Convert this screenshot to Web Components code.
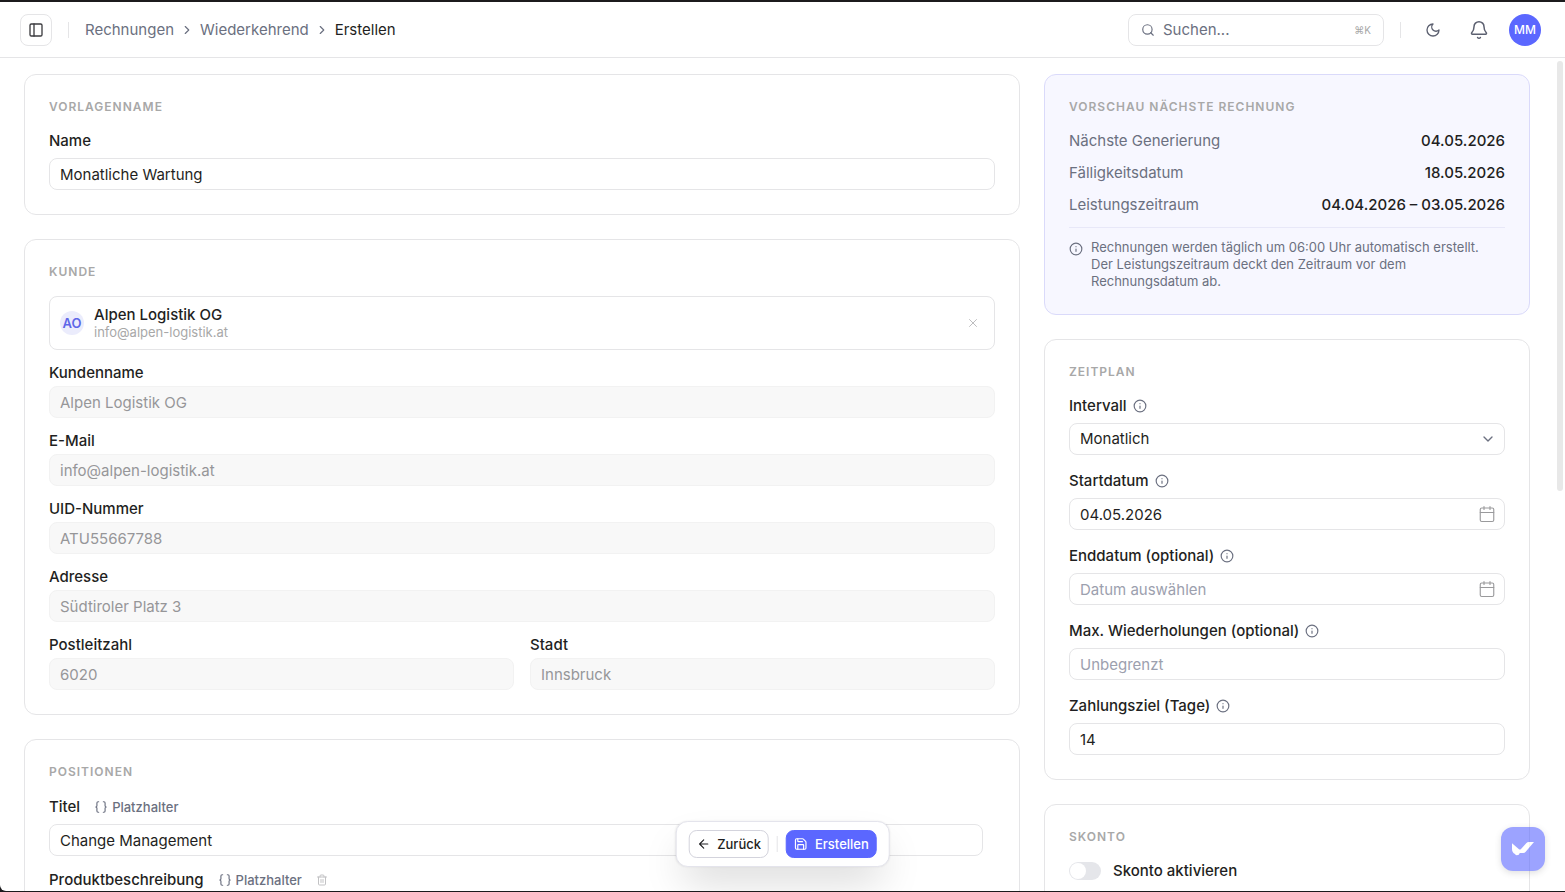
<!DOCTYPE html>
<html lang="de">
<head>
<meta charset="utf-8">
<meta name="viewport" content="width=device-width, initial-scale=1">
<title>Wiederkehrende Rechnung erstellen</title>
<style>
    :root {
        --text: #1f1f22;
        --muted: #6b7080;
        --faint: #a8a8a8;
        --placeholder: #9ca0ae;
        --line: #e5e5e7;
        --primary: #5b67ff;
    }
    html, body { height: 100%; }
    body {
        margin: 0;
        background: #1c1b1d;
        color: var(--text);
        font: 15px/20px Inter, "Liberation Sans", sans-serif;
        overflow: hidden;
    }
</style>
</head>
<body>
<invoice-app></invoice-app>

<script>
const ICONS = {
    panel: '<rect x="3" y="3" width="18" height="18" rx="2"/><path d="M9 3v18"/>',
    right: '<path d="m9 18 6-6-6-6"/>',
    down: '<path d="m6 9 6 6 6-6"/>',
    search: '<circle cx="11" cy="11" r="8"/><path d="m21 21-4.3-4.3"/>',
    moon: '<path d="M12 3a6 6 0 0 0 9 9 9 9 0 1 1-9-9Z"/>',
    bell: '<path d="M10.3 21a1.94 1.94 0 0 0 3.4 0"/><path d="M3.26 15.33A1 1 0 0 0 4 17h16a1 1 0 0 0 .74-1.67C19.41 13.96 18 12.5 18 8A6 6 0 0 0 6 8c0 4.5-1.41 5.96-2.74 7.33"/>',
    close: '<path d="M18 6 6 18M6 6l12 12"/>',
    info: '<circle cx="12" cy="12" r="10"/><path d="M12 16v-4M12 8h.01"/>',
    calendar: '<path d="M8 2v4M16 2v4M3 10h18"/><rect x="3" y="4" width="18" height="18" rx="2"/>',
    braces: '<path d="M8 3H7a2 2 0 0 0-2 2v5a2 2 0 0 1-2 2 2 2 0 0 1 2 2v5a2 2 0 0 0 2 2h1M16 21h1a2 2 0 0 0 2-2v-5a2 2 0 0 1 2-2 2 2 0 0 1-2-2V5a2 2 0 0 0-2-2h-1"/>',
    trash: '<path d="M3 6h18M19 6v14a2 2 0 0 1-2 2H7a2 2 0 0 1-2-2V6M8 6V4a2 2 0 0 1 2-2h4a2 2 0 0 1 2 2v2M10 11v6M14 11v6"/>',
    back: '<path d="m12 19-7-7 7-7M19 12H5"/>',
    save: '<path d="M15.2 3a2 2 0 0 1 1.4.6l3.8 3.8a2 2 0 0 1 .6 1.4V19a2 2 0 0 1-2 2H5a2 2 0 0 1-2-2V5a2 2 0 0 1 2-2z"/><path d="M17 21v-7a1 1 0 0 0-1-1H8a1 1 0 0 0-1 1v7M7 3v4a1 1 0 0 0 1 1h7"/>',
    brand: '<path fill="currentColor" stroke="none" d="M1 6.200 8 12.300Q9 13 10 12L15.200 6.200Q16.300 5 18 5H23L14.700 14.800Q13.700 16 12.200 16H8.800Q8.200 18.300 6 18.300 4.500 18.200 4 17 1 15.500 1 12Z"/>'
};

// Shared by every element that holds controls.
const BASE = `
    *, *::before, *::after { box-sizing: border-box; }
    button, input, select { font: inherit; color: inherit; margin: 0; }
    button { border: 0; padding: 0; background: none; cursor: pointer; }
`;

class UiElement extends HTMLElement {
    connectedCallback() {
        if (this.shadowRoot) return;
        this.attachShadow({ mode: "open" });
        this.shadowRoot.innerHTML = `<style>${BASE}</style>${this.template()}`;
    }

    attr(name) {
        return this.getAttribute(name) || "";
    }
}

// <ui-icon name="bell" size="18">
class UiIcon extends UiElement {
    template() {
        const size = this.attr("size") || 14;
        return `
            <style>
                :host { display: inline-flex; flex: none; }
                svg { display: block; fill: none; stroke: currentColor; stroke-linecap: round; stroke-linejoin: round; }
            </style>
            <svg width="${size}" height="${size}" viewBox="0 0 24 24" stroke-width="${this.attr("stroke") || 2}" aria-hidden="true">${ICONS[this.attr("name")]}</svg>
        `;
    }
}
customElements.define("ui-icon", UiIcon);

// Bordered section with an uppercase heading.
class UiCard extends UiElement {
    template() {
        return `
            <style>
                :host {
                    display: block;
                    border: 1px solid var(--line);
                    border-radius: 12px;
                    padding: 24px;
                    background: #fff;
                }
                :host([tinted]) { background: #f7f7ff; border-color: #dadafa; }
                h2 {
                    margin: 0 0 16px;
                    font-size: 12px;
                    line-height: 16px;
                    font-weight: 600;
                    letter-spacing: 1px;
                    text-transform: uppercase;
                    color: var(--faint);
                }
                .body { display: flex; flex-direction: column; gap: 16px; }
                :host([dense]) .body { gap: 13px; }
            </style>
            <h2>${this.attr("heading")}</h2>
            <div class="body"><slot></slot></div>
        `;
    }
}
customElements.define("ui-card", UiCard);

// Label plus text box or drop-down.
class UiField extends UiElement {
    control() {
        const value = this.attr("value");
        if (this.attr("type") === "select") {
            return `<select id="control"><option>${value}</option></select><ui-icon class="end down" name="down" size="16"></ui-icon>`;
        }
        const icon = this.hasAttribute("calendar")
            ? '<button class="end" type="button" aria-label="Kalender öffnen"><ui-icon name="calendar" size="18" stroke="1.5"></ui-icon></button>'
            : "";
        return `<input id="control" type="text" value="${value}" placeholder="${this.attr("placeholder")}"${this.hasAttribute("disabled") ? " disabled" : ""}>${icon}`;
    }

    template() {
        return `
            <style>
                :host { display: flex; flex-direction: column; gap: 7px; min-width: 0; }
                :host([disabled]) { gap: 3px; }
                .head { display: flex; align-items: center; gap: 6px; line-height: 20px; }
                label { font-weight: 500; }
                .info { display: flex; color: var(--muted); }
                .box { display: grid; align-items: center; }
                .box > * { grid-area: 1 / 1; }
                input, select {
                    width: 100%;
                    height: 32px;
                    padding: 0 10px;
                    border: 1px solid var(--line);
                    border-radius: 8px;
                    background: #fff;
                    appearance: none;
                    outline-color: var(--primary);
                }
                input::placeholder { color: var(--placeholder); opacity: 1; }
                input:disabled { background: #f8f8f8; border-color: #f2f2f2; color: #969698; }
                .end { display: flex; justify-self: end; margin-right: 9px; color: #9a9a9c; }
                .down { color: var(--muted); pointer-events: none; }
            </style>
            <div class="head">
                <label for="control">${this.attr("label")}</label>
                ${this.hasAttribute("info") ? '<button class="info" type="button" aria-label="Info"><ui-icon name="info"></ui-icon></button>' : ""}
                <slot></slot>
            </div>
            <div class="box">${this.control()}</div>
        `;
    }
}
customElements.define("ui-field", UiField);

// Small "{ } Platzhalter" action that sits beside a label.
class PlaceholderButton extends UiElement {
    template() {
        return `
            <style>
                :host { display: inline-flex; height: 21px; margin-left: 8px; }
                button { display: flex; align-items: center; gap: 4px; font-size: 13px; font-weight: 500; color: var(--muted); }
            </style>
            <button type="button"><ui-icon name="braces"></ui-icon>Platzhalter</button>
        `;
    }
}
customElements.define("placeholder-button", PlaceholderButton);

class UiSwitch extends UiElement {
    template() {
        return `
            <style>
                :host { display: flex; align-items: center; gap: 12px; }
                input {
                    appearance: none;
                    display: flex;
                    width: 32px;
                    height: 18px;
                    padding: 1px;
                    border-radius: 9px;
                    background: #e5e6ea;
                }
                input::before { content: ""; width: 16px; border-radius: 8px; background: #fff; }
                input:checked { justify-content: flex-end; background: var(--primary); }
                label { font-weight: 500; line-height: 20px; }
            </style>
            <input id="toggle" type="checkbox" role="switch">
            <label for="toggle"><slot></slot></label>
        `;
    }
}
customElements.define("ui-switch", UiSwitch);

class CustomerChip extends UiElement {
    template() {
        return `
            <style>
                :host {
                    display: flex;
                    align-items: center;
                    gap: 10px;
                    height: 54px;
                    box-sizing: border-box;
                    padding: 0 14px 0 10px;
                    border: 1px solid var(--line);
                    border-radius: 8px;
                }
                .avatar {
                    display: grid;
                    place-items: center;
                    width: 24px;
                    height: 24px;
                    border-radius: 50%;
                    background: #ebecfc;
                    color: #5d66e8;
                    font-size: 13px;
                    font-weight: 600;
                }
                .who { flex: 1; min-width: 0; }
                .name { font-weight: 500; line-height: 18px; }
                .mail { font-size: 13px; line-height: 16px; color: var(--faint); }
                button { display: flex; color: #b4b4b6; }
            </style>
            <div class="avatar">AO</div>
            <div class="who">
                <div class="name">${this.attr("name")}</div>
                <div class="mail">${this.attr("mail")}</div>
            </div>
            <button type="button" aria-label="Kunde entfernen"><ui-icon name="close" stroke="1.5"></ui-icon></button>
        `;
    }
}
customElements.define("customer-chip", CustomerChip);

class InvoicePreview extends UiElement {
    template() {
        return `
            <style>
                :host { display: block; }
                dl { display: grid; gap: 12px; margin: 0; padding-bottom: 12px; border-bottom: 1px solid #e8e8f8; }
                dl div { display: flex; justify-content: space-between; gap: 16px; line-height: 20px; }
                dt { color: var(--muted); }
                dd { margin: 0; font-weight: 500; }
                .note { display: flex; gap: 8px; padding-top: 11px; font-size: 13px; line-height: 17px; color: var(--muted); }
                .note ui-icon { padding-top: 3px; }
                p { margin: 0; }
            </style>
            <dl>
                <div><dt>Nächste Generierung</dt><dd>04.05.2026</dd></div>
                <div><dt>Fälligkeitsdatum</dt><dd>18.05.2026</dd></div>
                <div><dt>Leistungszeitraum</dt><dd>04.04.2026 – 03.05.2026</dd></div>
            </dl>
            <div class="note">
                <ui-icon name="info"></ui-icon>
                <p>Rechnungen werden täglich um 06:00 Uhr automatisch erstellt.<br>Der Leistungszeitraum deckt den Zeitraum vor dem Rechnungsdatum ab.</p>
            </div>
        `;
    }
}
customElements.define("invoice-preview", InvoicePreview);

class AppHeader extends UiElement {
    template() {
        return `
            <style>
                :host {
                    display: flex;
                    align-items: center;
                    flex: none;
                    gap: 16px;
                    height: 56px;
                    box-sizing: border-box;
                    padding: 0 24px 0 20px;
                    border-bottom: 1px solid var(--line);
                }
                button { display: grid; place-items: center; width: 32px; height: 32px; color: #5c6070; }
                .toggle { border: 1px solid var(--line); border-radius: 8px; color: #3c3c40; }
                .divider { width: 1px; height: 16px; background: var(--line); }
                nav { flex: 1; }
                ol { display: flex; align-items: center; gap: 6px; margin: 0; padding: 0; list-style: none; color: var(--muted); }
                li { display: flex; align-items: center; gap: 6px; }
                a { color: inherit; text-decoration: none; }
                [aria-current] { color: var(--text); }
                .search {
                    display: flex;
                    align-items: center;
                    gap: 8px;
                    width: 256px;
                    height: 32px;
                    padding: 0 12px;
                    border: 1px solid var(--line);
                    border-radius: 8px;
                    color: var(--muted);
                }
                .search input { flex: 1; min-width: 0; padding: 0; border: 0; outline: 0; background: none; appearance: none; }
                .search input::placeholder { color: inherit; opacity: 1; }
                kbd { font: inherit; font-size: 10px; color: var(--faint); }
                .tools { display: flex; align-items: center; gap: 14px; }
                .tools .avatar { border-radius: 50%; background: var(--primary); color: #fff; font-size: 12px; font-weight: 500; }
            </style>
            <button class="toggle" type="button" aria-label="Seitenleiste"><ui-icon name="panel" size="16"></ui-icon></button>
            <span class="divider"></span>
            <nav aria-label="Brotkrumen">
                <ol>
                    <li><a href="#rechnungen">Rechnungen</a><ui-icon name="right"></ui-icon></li>
                    <li><a href="#wiederkehrend">Wiederkehrend</a><ui-icon name="right"></ui-icon></li>
                    <li aria-current="page">Erstellen</li>
                </ol>
            </nav>
            <label class="search">
                <ui-icon name="search"></ui-icon>
                <input type="search" placeholder="Suchen..." aria-label="Suchen">
                <kbd>⌘K</kbd>
            </label>
            <span class="divider"></span>
            <div class="tools">
                <button type="button" aria-label="Dunkelmodus"><ui-icon name="moon" size="16"></ui-icon></button>
                <button type="button" aria-label="Benachrichtigungen"><ui-icon name="bell" size="20" stroke="1.8"></ui-icon></button>
                <button class="avatar" type="button">MM</button>
            </div>
        `;
    }
}
customElements.define("app-header", AppHeader);

// Floating bar with the form's actions.
class ActionBar extends UiElement {
    template() {
        return `
            <style>
                :host {
                    display: flex;
                    align-items: center;
                    gap: 8px;
                    padding: 8px 12px;
                    border: 1px solid #e4e4ec;
                    border-radius: 12px;
                    background: #fff;
                    box-shadow: 0 20px 40px -8px rgb(0 0 0 / .18), 0 0 2px rgb(0 0 0 / .08);
                }
                button {
                    display: flex;
                    align-items: center;
                    gap: 7px;
                    height: 28px;
                    padding: 0 7px;
                    border: 1px solid #d3d3dc;
                    border-radius: 8px;
                    font-size: 13px;
                    font-weight: 500;
                    background: #fff;
                }
                button.primary { border-color: var(--primary); background: var(--primary); color: #fff; }
                .divider { width: 1px; height: 16px; background: var(--line); }
            </style>
            <button type="button"><ui-icon name="back"></ui-icon>Zurück</button>
            <span class="divider"></span>
            <button class="primary" type="submit"><ui-icon name="save"></ui-icon>Erstellen</button>
        `;
    }
}
customElements.define("action-bar", ActionBar);

class InvoiceApp extends UiElement {
    template() {
        return `
            <style>
                :host {
                    position: relative;
                    display: flex;
                    flex-direction: column;
                    height: calc(100vh - 3px);
                    margin-top: 2px;
                    overflow: hidden;
                    border-bottom-left-radius: 6px;
                    background: #fff;
                }
                main {
                    flex: 1;
                    min-height: 0;
                    overflow: hidden;
                    display: grid;
                    grid-template-columns: repeat(3, minmax(0, 1fr));
                    align-items: start;
                    gap: 24px;
                    padding: 16px 35px 16px 24px;
                }
                .column { display: flex; flex-direction: column; gap: 24px; }
                .wide { grid-column: span 2; }
                .pair { display: grid; grid-template-columns: 1fr 1fr; gap: 16px; }
                .position { display: flex; flex-direction: column; gap: 13px; padding-right: 12px; }
                .delete { display: flex; margin-left: 8px; color: #c2c2c4; }
                .thumb { position: absolute; top: 59px; right: 2px; width: 6px; height: 430px; border-radius: 3px; background: #e8e8e8; }
                action-bar { position: absolute; bottom: 24px; left: 50%; transform: translateX(-50%); }
                .assist {
                    position: absolute;
                    right: 20px;
                    bottom: 20px;
                    display: grid;
                    place-items: center;
                    width: 44px;
                    height: 44px;
                    border-radius: 12px;
                    background: var(--primary);
                    color: #fff;
                    opacity: .6;
                    box-shadow: 0 2px 6px rgb(0 0 0 / .2);
                }
            </style>
            <app-header></app-header>
            <main>
                <div class="column wide">
                    <ui-card heading="Vorlagenname">
                        <ui-field label="Name" value="Monatliche Wartung"></ui-field>
                    </ui-card>
                    <ui-card heading="Kunde" dense>
                        <customer-chip name="Alpen Logistik OG" mail="info@alpen-logistik.at"></customer-chip>
                        <ui-field label="Kundenname" value="Alpen Logistik OG" disabled></ui-field>
                        <ui-field label="E-Mail" value="info@alpen-logistik.at" disabled></ui-field>
                        <ui-field label="UID-Nummer" value="ATU55667788" disabled></ui-field>
                        <ui-field label="Adresse" value="Südtiroler Platz 3" disabled></ui-field>
                        <div class="pair">
                            <ui-field label="Postleitzahl" value="6020" disabled></ui-field>
                            <ui-field label="Stadt" value="Innsbruck" disabled></ui-field>
                        </div>
                    </ui-card>
                    <ui-card heading="Positionen">
                        <div class="position">
                            <ui-field label="Titel" value="Change Management"><placeholder-button></placeholder-button></ui-field>
                            <ui-field label="Produktbeschreibung">
                                <placeholder-button></placeholder-button>
                                <button class="delete" type="button" aria-label="Löschen"><ui-icon name="trash" size="12"></ui-icon></button>
                            </ui-field>
                        </div>
                    </ui-card>
                </div>
                <div class="column">
                    <ui-card heading="Vorschau nächste Rechnung" tinted><invoice-preview></invoice-preview></ui-card>
                    <ui-card heading="Zeitplan">
                        <ui-field label="Intervall" type="select" value="Monatlich" info></ui-field>
                        <ui-field label="Startdatum" value="04.05.2026" info calendar></ui-field>
                        <ui-field label="Enddatum (optional)" placeholder="Datum auswählen" info calendar></ui-field>
                        <ui-field label="Max. Wiederholungen (optional)" placeholder="Unbegrenzt" info></ui-field>
                        <ui-field label="Zahlungsziel (Tage)" value="14" info></ui-field>
                    </ui-card>
                    <ui-card heading="Skonto"><ui-switch>Skonto aktivieren</ui-switch></ui-card>
                </div>
            </main>
            <div class="thumb"></div>
            <action-bar></action-bar>
            <button class="assist" type="button" aria-label="Assistent"><ui-icon name="brand" size="24"></ui-icon></button>
        `;
    }
}
customElements.define("invoice-app", InvoiceApp);
</script>
</body>
</html>
